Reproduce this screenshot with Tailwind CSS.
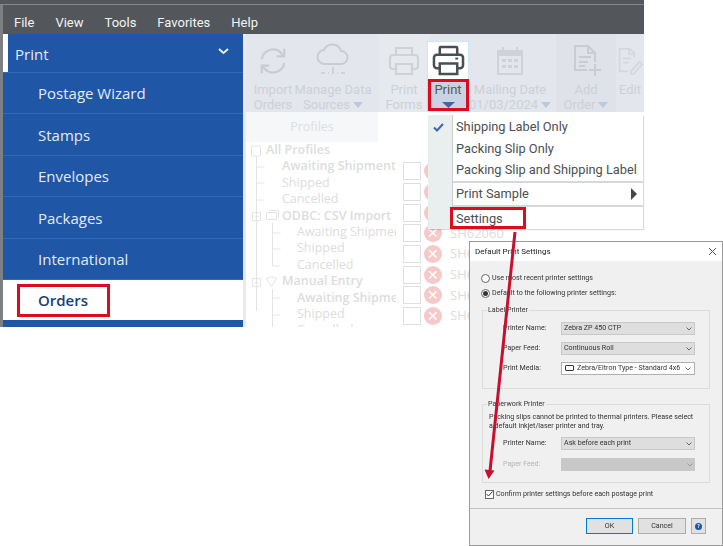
<!DOCTYPE html>
<html lang="en">
<head>
    <meta charset="UTF-8">
    <title>Print Settings</title>
    <script src="https://cdn.jsdelivr.net/npm/@tailwindcss/browser@4"></script>
</head>
<body class="bg-white">
<div class="relative w-[723px] h-[546px] overflow-hidden bg-white font-['Open_Sans',sans-serif]">

    <!-- app window -->
    <div class="w-[644px] h-[327px] bg-[#53575b] flex flex-col overflow-hidden">
        <div class="h-[5px] shrink-0 border-b border-[#85888b]"></div>
        <div class="h-[29px] shrink-0 pt-[7px] flex items-center font-['Roboto',sans-serif] text-[13px] text-[#f2f3f4] border-l-[3px] border-[#7d8083]">
            <span class="ml-[11px]">File</span>
            <span class="ml-[21px]">View</span>
            <span class="ml-[21px]">Tools</span>
            <span class="ml-[21px]">Favorites</span>
            <span class="ml-[21px]">Help</span>
        </div>
        <div class="flex flex-1 min-h-0 border-l-[3px] border-[#7d8083]">
            <!-- sidebar -->
            <nav class="w-[240px] shrink-0 bg-[#1f56a6] text-[15px] text-[#e4ebf6]">
                <div class="h-[39px] flex items-center justify-between border-b border-[#3268b4]">
                    <div class="flex items-center h-full">
                        <span class="w-[5px] h-full bg-white"></span>
                        <span class="ml-[7px] pt-[3px]">Print</span>
                    </div>
                    <svg class="mr-[14px] mb-1" width="11" height="7" viewBox="0 0 11 7" fill="none" stroke="#e8eef8" stroke-width="2"><path d="M1 1l4.500 4L10 1"/></svg>
                </div>
                <div class="h-[41px] pt-[1px] flex items-center pl-[35px] border-b border-[#3268b4]">Postage Wizard</div>
                <div class="h-[41.5px] pt-[1px] flex items-center pl-[35px] border-b border-[#3268b4]">Stamps</div>
                <div class="h-[41.5px] pt-[1px] flex items-center pl-[35px] border-b border-[#3268b4]">Envelopes</div>
                <div class="h-[41.5px] pt-[1px] flex items-center pl-[35px] border-b border-[#3268b4]">Packages</div>
                <div class="h-[41.5px] pt-[1px] flex items-center pl-[35px] border-b border-[#3268b4]">International</div>
                <div class="h-[40px] pt-[1px] flex items-center pl-[35px] bg-white font-semibold text-[#1c4079]">Orders</div>
            </nav>

            <!-- main area, greyed out behind the menu -->
            <div class="flex-1 min-w-0 bg-white border-l-[3px] border-[#e7e9ee] flex flex-col overflow-hidden">
                <div class="h-[78px] shrink-0 bg-[#e3e6ec] flex pl-[4px] font-['Roboto',sans-serif] text-[13px] leading-[14.5px] text-[#cdd0d6] text-center">
                    <div class="w-[46px] shrink-0 flex flex-col items-center">
                        <div class="h-[49px] pt-[4px] flex items-center">
                            <svg width="30" height="30" viewBox="0 0 32 32" fill="none" stroke="#c9ccd1" stroke-width="2.400"><path d="M4 14a12 12 0 0 1 21-6l3 3M28 18a12 12 0 0 1-21 6l-3-3"/><path d="M28 3v8h-8M4 29v-8h8"/></svg>
                        </div>
                        <div class="whitespace-nowrap">Import<br>Orders</div>
                    </div>
                    <div class="w-[74px] shrink-0 flex flex-col items-center">
                        <div class="h-[49px] pt-[1px] flex items-center">
                            <svg width="34" height="36" viewBox="0 0 34 36" fill="none" stroke="#c9ccd1" stroke-width="2"><path d="M9 23a7 7 0 0 1-1-14 9 9 0 0 1 17 1 6.500 6.500 0 0 1 0 13z"/><path d="M17 26v5M5 32h4M12 32h1M16 32h2M21 32h1M25 32h4" stroke-width="1.500"/></svg>
                        </div>
                        <div class="whitespace-nowrap">Manage Data<br><span class="inline-flex items-center gap-[3px]">Sources<svg width="10" height="6" viewBox="0 0 10 6"><path d="M0 0h10L5 6z" fill="#bcc8dc"/></svg></span></div>
                    </div>
                    <div class="w-[8px] shrink-0"></div>
                    <div class="w-[52px] shrink-0 flex flex-col items-center bg-[#e6e9ee]">
                        <div class="h-[49px] pt-[5px] flex items-center">
                            <svg width="32" height="32" viewBox="0 0 32 32" fill="none" stroke="#cfd2d7" stroke-width="2.200"><path d="M8 10V3h16v7M8 24H5a3 3 0 0 1-3-3V13a3 3 0 0 1 3-3h22a3 3 0 0 1 3 3v8a3 3 0 0 1-3 3h-3"/><path d="M8 19h16v10H8z"/></svg>
                        </div>
                        <div class="whitespace-nowrap">Print<br>Forms</div>
                    </div>
                    <!-- spacer under the active button -->
                    <div class="w-[39px] shrink-0"></div>
                    <div class="w-[82px] shrink-0 flex flex-col items-center">
                        <div class="h-[49px] pt-[4px] flex items-center">
                            <svg width="32" height="32" viewBox="0 0 32 32" fill="#cfd2d7"><path d="M3 5h5V2h2v3h12V2h2v3h5v25H3zm2 6v17h22V11zm3 3h4v3H8zm6 0h4v3h-4zm6 0h4v3h-4zM8 20h4v3H8zm6 0h4v3h-4zm6 0h4v3h-4z" fill-rule="evenodd"/></svg>
                        </div>
                        <div class="whitespace-nowrap">Mailing Date<br><span class="inline-flex items-center gap-[3px]">01/03/2024<svg width="10" height="6" viewBox="0 0 10 6"><path d="M0 0h10L5 6z" fill="#bcc8dc"/></svg></span></div>
                    </div>
                    <div class="w-[5px] shrink-0"></div>
                    <div class="w-[60px] shrink-0 flex flex-col items-center bg-[#dfe2e9]">
                        <div class="h-[49px] pt-[5px] flex items-center">
                            <svg width="32" height="34" viewBox="0 0 32 34" fill="none" stroke="#c9ccd1" stroke-width="2"><path d="M17 26H5V2h13l7 7v9M18 2v7h7M9 13h12M9 18h9M9 22h6"/><path d="M25 20v12M19 26h12"/></svg>
                        </div>
                        <div class="whitespace-nowrap">Add<br><span class="inline-flex items-center gap-[3px]">Order<svg width="10" height="6" viewBox="0 0 10 6"><path d="M0 0h10L5 6z" fill="#bcc8dc"/></svg></span></div>
                    </div>
                    <div class="flex-1 flex flex-col items-center">
                        <div class="h-[49px] pt-[5px] flex items-center">
                            <svg width="26" height="32" viewBox="0 0 30 32" fill="none" stroke="#d5d7dc" stroke-width="2"><path d="M20 12V7l-5-5H3v26h10M14 2v6h6M7 13h9M7 18h6"/><path d="M16 28l10-11 3 3-10 11h-3z"/></svg>
                        </div>
                        <div>Edit</div>
                    </div>
                </div>
                <div class="flex flex-1 min-h-0">
                    <!-- profiles tree -->
                    <div class="relative w-[150px] shrink-0 overflow-hidden text-[12.5px] leading-[16.4px] text-[#dddddd] whitespace-nowrap">
                        <div class="h-[30px] bg-[#f5f7f8] w-[132px] flex items-center justify-center text-[#dcdfe3] text-[12.5px]">Profiles</div>
                        <div class="pl-[20px] font-semibold">All Profiles</div>
                        <div class="pl-[36px] font-semibold">Awaiting Shipment</div>
                        <div class="pl-[36px]">Shipped</div>
                        <div class="pl-[36px]">Cancelled</div>
                        <div class="pl-[36px] font-semibold">ODBC: CSV Import</div>
                        <div class="pl-[51px]">Awaiting Shipment</div>
                        <div class="pl-[51px]">Shipped</div>
                        <div class="pl-[51px]">Cancelled</div>
                        <div class="pl-[36px] font-semibold">Manual Entry</div>
                        <div class="pl-[51px] font-semibold">Awaiting Shipment</div>
                        <div class="pl-[51px]">Shipped</div>
                        <div class="pl-[51px]">Cancelled</div>
                        <!-- connector lines and tree icons -->
                        <svg class="absolute left-0 top-0" width="40" height="215" viewBox="0 0 40 215" fill="none" stroke="#e4e4e4">
                            <path d="M10.500 45v154M10.500 55h8M10.500 71h8M10.500 88h8M26.500 111v43M26.500 121h8M26.500 137h8M26.500 154h8M26.500 177v38M26.500 186h8M26.500 203h8"/>
                            <path d="M5.500 34h9v10h-9z"/>
                            <path d="M6.500 100.500h8v8h-8zM8.500 104.500h4M6.500 166.500h8v8h-8zM8.500 170.500h4"/>
                            <path d="M20.500 100.500h10v7h-10zM22.500 98.500h10v7M20.500 166.500l5-2 5 2-5 8z"/>
                        </svg>
                    </div>
                    <!-- order rows -->
                    <div class="flex-1 pl-[7px] pt-[49px] flex flex-col text-[13px] text-[#dcdcdc] overflow-hidden">
                        <div class="h-[20.7px] shrink-0 flex items-center gap-[3px]"><span class="w-[18px] h-[18px] border border-[#dfdfdf]"></span><span class="w-[18px] h-[18px] rounded-full bg-[#f6c9c9] text-white text-[14px] leading-[18px] text-center">✕</span><span class="ml-[5px]">SH62057</span></div>
                        <div class="h-[20.7px] shrink-0 flex items-center gap-[3px]"><span class="w-[18px] h-[18px] border border-[#dfdfdf]"></span><span class="w-[18px] h-[18px] rounded-full bg-[#f6c9c9] text-white text-[14px] leading-[18px] text-center">✕</span><span class="ml-[5px]">SH62058</span></div>
                        <div class="h-[20.7px] shrink-0 flex items-center gap-[3px]"><span class="w-[18px] h-[18px] border border-[#dfdfdf]"></span><span class="w-[18px] h-[18px] rounded-full bg-[#f6c9c9] text-white text-[14px] leading-[18px] text-center">✕</span><span class="ml-[5px]">SH62059</span></div>
                        <div class="h-[20.7px] shrink-0 flex items-center gap-[3px]"><span class="w-[18px] h-[18px] border border-[#dfdfdf]"></span><span class="w-[18px] h-[18px] rounded-full bg-[#f6c9c9] text-white text-[14px] leading-[18px] text-center">✕</span><span class="ml-[5px]">SH62060</span></div>
                        <div class="h-[20.7px] shrink-0 flex items-center gap-[3px]"><span class="w-[18px] h-[18px] border border-[#dfdfdf]"></span><span class="w-[18px] h-[18px] rounded-full bg-[#f6c9c9] text-white text-[14px] leading-[18px] text-center">✕</span><span class="ml-[5px]">SH62061</span></div>
                        <div class="h-[20.7px] shrink-0 flex items-center gap-[3px]"><span class="w-[18px] h-[18px] border border-[#dfdfdf]"></span><span class="w-[18px] h-[18px] rounded-full bg-[#f6c9c9] text-white text-[14px] leading-[18px] text-center">✕</span><span class="ml-[5px]">SH62062</span></div>
                        <div class="h-[20.7px] shrink-0 flex items-center gap-[3px]"><span class="w-[18px] h-[18px] border border-[#dfdfdf]"></span><span class="w-[18px] h-[18px] rounded-full bg-[#f6c9c9] text-white text-[14px] leading-[18px] text-center">✕</span><span class="ml-[5px]">SH62063</span></div>
                        <div class="h-[20.7px] shrink-0 flex items-center gap-[3px]"><span class="w-[18px] h-[18px] border border-[#dfdfdf]"></span><span class="w-[18px] h-[18px] rounded-full bg-[#f6c9c9] text-white text-[14px] leading-[18px] text-center">✕</span><span class="ml-[5px]">SH62064</span></div>
                    </div>
                </div>
            </div>
        </div>
    </div>

    <!-- active Print button -->
    <div class="absolute left-[427px] top-[41px] w-[42px] h-[70px] flex flex-col items-center font-['Roboto',sans-serif] text-[13px] text-[#555a60]">
        <div class="w-full h-[38px] bg-white border border-b-0 border-[#cfe6f5] flex items-center justify-center">
            <svg width="33" height="31" viewBox="0 0 34 32" fill="none" stroke="#4a4f55" stroke-width="2.600"><path d="M8 10V3a1 1 0 0 1 1-1h16a1 1 0 0 1 1 1v7M8 24H5a3 3 0 0 1-3-3v-8a3 3 0 0 1 3-3h24a3 3 0 0 1 3 3v8a3 3 0 0 1-3 3h-3"/><path d="M8 19h18v11H8z"/><path d="M24 14h3" stroke-width="2"/></svg>
        </div>
        <div class="w-full flex-1 bg-[#c9d3e3] flex flex-col items-center pt-[2px] leading-[18px]">
            Print
            <svg width="13" height="6" viewBox="0 0 13 6" class="mt-[3px]"><path d="M0 0h13L6.500 6z" fill="#3f66a6"/></svg>
        </div>
    </div>

    <!-- dropdown menu -->
    <div class="absolute left-[428px] top-[115px] w-[215px] h-[114px] bg-white flex font-['Roboto',sans-serif] text-[12.8px] text-[#4c4f52] shadow-[1px_1px_1px_rgba(0,0,0,0.15)]">
        <div class="w-[25px] bg-[#e9eeee] border-r border-[#c9cdcd] shrink-0 pt-[8px] pl-[5px]">
            <svg width="11" height="9" viewBox="0 0 11 9" fill="none" stroke="#3f66a6" stroke-width="2"><path d="M1 4.500l3 3L10 1"/></svg>
        </div>
        <div class="flex-1 min-w-0 pl-[3px] flex flex-col">
            <div class="h-[21.500px] mt-[1px] flex items-center whitespace-nowrap">Shipping Label Only</div>
            <div class="h-[21.500px] flex items-center whitespace-nowrap">Packing Slip Only</div>
            <div class="h-[21.500px] flex items-center whitespace-nowrap">Packing Slip and Shipping Label</div>
            <div class="h-[2px] mt-[0.500px] -ml-[3px] bg-[#d5d7d8]"></div>
            <div class="h-[22px] flex items-center justify-between pr-[6px]">Print Sample<span class="w-0 h-0 border-y-[6px] border-y-transparent border-l-[6px] border-l-[#43474b]"></span></div>
            <div class="h-[2px] mt-[0.500px] mb-[1px] -ml-[3px] bg-[#d5d7d8]"></div>
            <div class="h-[21px] flex items-center">Settings</div>
        </div>
    </div>

    <!-- Default Print Settings dialog -->
    <div class="absolute left-[469px] top-[241px] w-[254px] h-[305px] bg-[#f0f0f0] border border-[#9a9a9a] flex flex-col font-['Roboto',sans-serif] text-[7.1px] text-[#333333] blur-[0.3px]">
        <div class="h-[19px] shrink-0 bg-white flex items-center justify-between pl-[5px] pr-[5px] text-[8px] text-[#222222]">
            <span>Default Print Settings</span>
            <svg width="9" height="9" viewBox="0 0 9 9" stroke="#555555" fill="none"><path d="M1 1l7 7M8 1L1 8"/></svg>
        </div>
        <div class="flex-1 px-[12px] pt-[10px] flex flex-col">
            <div class="flex items-center gap-[2px] h-[15px] -ml-[1px]">
                <span class="w-[9px] h-[9px] rounded-full border border-[#666666] bg-white"></span>
                <span>Use most recent printer settings</span>
            </div>
            <div class="flex items-center gap-[2px] h-[15px] -ml-[1px]">
                <span class="w-[9px] h-[9px] rounded-full border border-[#666666] bg-white flex items-center justify-center"><span class="w-[5px] h-[5px] rounded-full bg-[#333333]"></span></span>
                <span>Default to the following printer settings:</span>
            </div>
            <!-- label printer group -->
            <div class="relative mt-[9px] h-[79px] border border-[#dcdcdc] pt-[11px] flex flex-col gap-[7px]">
                <span class="absolute left-[4px] -top-[6px] bg-[#f0f0f0] px-[1px]">Label Printer</span>
                <div class="flex items-center pl-[20px]"><span class="w-[58px]">Printer Name:</span><div class="w-[134px] h-[13px] bg-[#dedede] border border-[#c8c8c8] flex items-center justify-between px-[2px]">Zebra ZP 450 CTP<svg width="6" height="4" viewBox="0 0 6 4" fill="none" stroke="#666666"><path d="M.5.500L3 3 5.500.500"/></svg></div></div>
                <div class="flex items-center pl-[20px]"><span class="w-[58px]">Paper Feed:</span><div class="w-[134px] h-[13px] bg-[#dedede] border border-[#c8c8c8] flex items-center justify-between px-[2px]">Continuous Roll<svg width="6" height="4" viewBox="0 0 6 4" fill="none" stroke="#666666"><path d="M.5.500L3 3 5.500.500"/></svg></div></div>
                <div class="flex items-center pl-[20px]"><span class="w-[58px]">Print Media:</span><div class="w-[134px] h-[13px] bg-white border border-[#b0b0b0] flex items-center justify-between px-[3px]"><span class="flex items-center gap-[3px] whitespace-nowrap overflow-hidden"><span class="w-[9px] h-[6px] shrink-0 rounded-[1px] border border-[#333333]"></span>Zebra/Eltron Type - Standard 4x6</span><svg class="shrink-0" width="6" height="4" viewBox="0 0 6 4" fill="none" stroke="#666666"><path d="M.5.500L3 3 5.500.500"/></svg></div></div>
            </div>
            <!-- paperwork printer group -->
            <div class="relative mt-[15px] h-[79px] border border-[#dcdcdc] pt-[7px] flex flex-col">
                <span class="absolute left-[4px] -top-[6px] bg-[#f0f0f0] px-[1px]">Paperwork Printer</span>
                <p class="pl-[6px] pr-[2px] leading-[9px] whitespace-nowrap">Packing slips cannot be printed to thermal printers. Please select<br>a default inkjet/laser printer and tray.</p>
                <div class="flex items-center pl-[20px] mt-[7px]"><span class="w-[58px]">Printer Name:</span><div class="w-[134px] h-[13px] bg-[#dedede] border border-[#c8c8c8] flex items-center justify-between px-[2px]">Ask before each print<svg width="6" height="4" viewBox="0 0 6 4" fill="none" stroke="#666666"><path d="M.5.500L3 3 5.500.500"/></svg></div></div>
                <div class="flex items-center pl-[20px] mt-[8px] text-[#b5b5b5]"><span class="w-[58px]">Paper Feed:</span><div class="w-[134px] h-[13px] bg-[#c8c8c8] flex items-center justify-end px-[2px]"><svg width="6" height="4" viewBox="0 0 6 4" fill="none" stroke="#999999"><path d="M.5.500L3 3 5.500.500"/></svg></div></div>
            </div>
            <div class="flex items-center gap-[2px] mt-[6px] ml-[3px] h-[10px]">
                <span class="w-[9px] h-[9px] border border-[#666666] bg-white flex items-center justify-center"><svg width="7" height="6" viewBox="0 0 7 6" fill="none" stroke="#333333"><path d="M.5 3l2 2L6.500.5"/></svg></span>
                <span class="whitespace-nowrap">Confirm printer settings before each postage print</span>
            </div>
        </div>
        <div class="h-[37px] shrink-0 border-t border-[#c4c4c4] flex items-center justify-end gap-[5px] pr-[16px] pb-[2px]">
            <div class="w-[47px] h-[16px] bg-[#e1e1e1] border border-[#0078d7] flex items-center justify-center">OK</div>
            <div class="w-[48px] h-[16px] bg-[#e1e1e1] border border-[#adadad] flex items-center justify-center">Cancel</div>
            <div class="w-[15px] h-[16px] bg-[#e1e1e1] border border-[#adadad] flex items-center justify-center"><span class="w-[7px] h-[7px] rounded-full bg-[#1f56a6] text-white text-[5px] leading-[7px] font-bold text-center">?</span></div>
        </div>
    </div>

    <!-- red callouts -->
    <div class="absolute left-[428px] top-[79px] w-[41px] h-[32px] border-[3px] border-[#dd0a22]"></div>
    <div class="absolute left-[450px] top-[207px] w-[76px] h-[22px] border-[3px] border-[#dd0a22]"></div>
    <div class="absolute left-[17px] top-[284px] w-[93px] h-[33px] border-[3px] border-[#dd0a22]"></div>
    <svg class="absolute left-0 top-0 pointer-events-none" width="723" height="546" viewBox="0 0 723 546" fill="none">
        <path d="M515 232L490 471" stroke="#c8102e" stroke-width="3"/>
        <path d="M484.500 469.500L494.500 470.500L488.500 479z" fill="#c8102e"/>
    </svg>
</div>
</body>
</html>
